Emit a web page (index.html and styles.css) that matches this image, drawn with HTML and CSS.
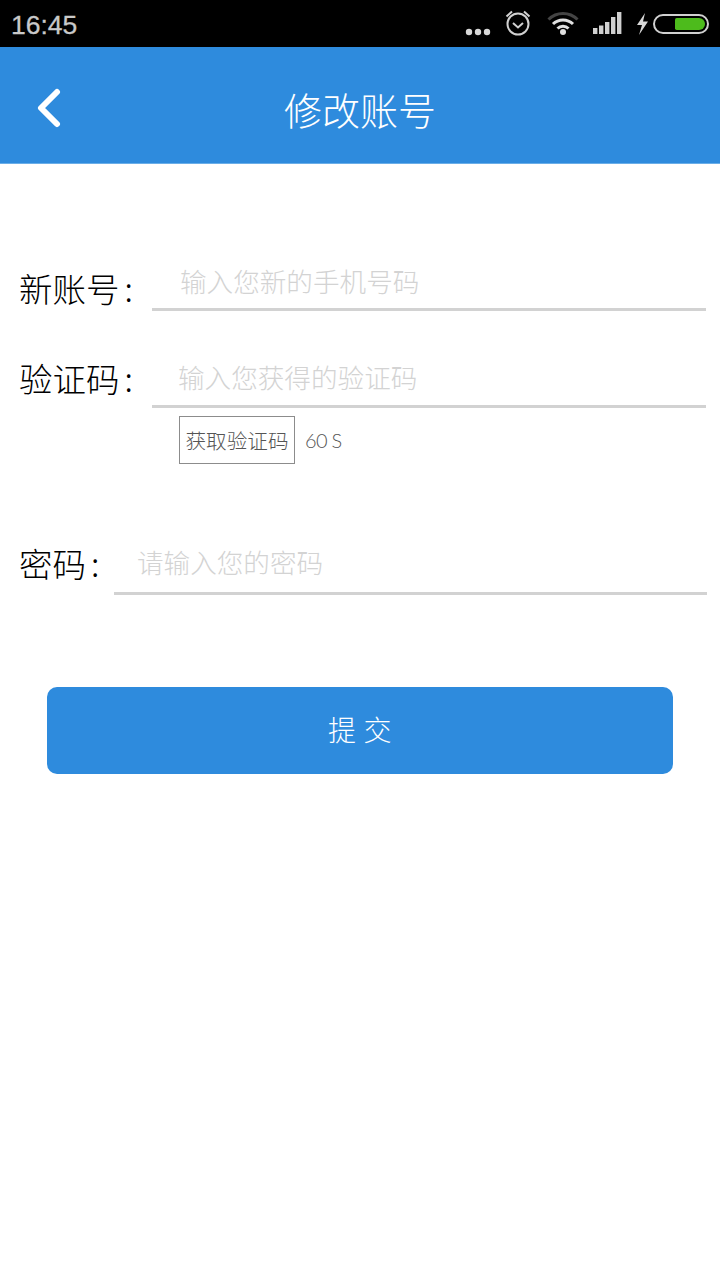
FILE: index.html
```html
<!DOCTYPE html>
<html lang="zh-CN">

<head>
    <meta charset="UTF-8">
    <meta name="viewport" content="width=device-width, initial-scale=1.0">
    <title>修改账号</title>
    <link rel="stylesheet" href="styles.css">
</head>

<body>
    <div class="status-bar">
        <span class="time">16:45</span>
        <div class="status-icons">
            <svg class="ic-dots" viewBox="0 0 26 8" width="26" height="8">
                <circle cx="4" cy="4" r="3.2" />
                <circle cx="13" cy="4" r="3.2" />
                <circle cx="22" cy="4" r="3.2" />
            </svg>
            <svg class="ic-alarm" viewBox="0 0 28 28" width="28" height="28">
                <circle cx="14" cy="15" r="10.5" />
                <polyline points="9,14 14,18.5 19,14" />
                <path d="M2.5 7.5 L8 2.5 M25.5 7.5 L20 2.5" />
            </svg>
            <svg class="ic-wifi" viewBox="0 0 32 26" width="32" height="26">
                <path class="dim" d="M1.5 9.5 C9.5 1.5 22.5 1.5 30.5 9.5" />
                <path d="M6 14 C11.5 8.5 20.5 8.5 26 14" />
                <path d="M10.5 18.5 C13.5 15.5 18.5 15.5 21.5 18.5" />
                <circle cx="16" cy="22" r="3" />
            </svg>
            <svg class="ic-signal" viewBox="0 0 29 24" width="29" height="24">
                <rect x="0" y="17" width="4.4" height="6" />
                <rect x="6" y="14.5" width="4.4" height="8.5" />
                <rect x="12" y="11" width="4.4" height="12" />
                <rect x="18" y="6" width="4.4" height="17" />
                <rect x="24" y="1" width="4.4" height="22" />
            </svg>
            <svg class="ic-bolt" viewBox="0 0 13 22" width="13" height="22">
                <polygon points="9,0 1,12 6,12 3,22 12,8.5 7,8.5" />
            </svg>
            <div class="battery"><div class="battery-level"></div></div>
        </div>
    </div>

    <header class="title-bar">
        <svg class="back" viewBox="0 0 28 40" width="28" height="40">
            <polyline points="24,4 8,20 24,36" />
        </svg>
        <h1>修改账号</h1>
    </header>

    <form class="form">
        <div class="row row-account">
            <label class="label">新账号<i>:</i></label>
            <div class="field field-account"><input type="text" placeholder="输入您新的手机号码"></div>
        </div>
        <div class="row row-code">
            <label class="label">验证码<i>:</i></label>
            <div class="field field-code"><input type="text" placeholder="输入您获得的验证码"></div>
        </div>
        <div class="code-line">
            <button type="button" class="code-btn">获取验证码</button>
            <span class="count">60 S</span>
        </div>
        <div class="row row-password">
            <label class="label">密码<i>:</i></label>
            <div class="field field-password"><input type="password" placeholder="请输入您的密码"></div>
        </div>
        <button type="button" class="submit">提 交</button>
    </form>
</body>

</html>
```

FILE: styles.css
```css
* {
    box-sizing: border-box;
}

body {
    margin: 0;
    height: 1280px;
    overflow: hidden;
    background: #fff;
    font-family: "Noto Sans CJK SC", "Noto Sans", sans-serif;
}

/* status bar */
.status-bar {
    display: flex;
    align-items: center;
    justify-content: space-between;
    height: 47px;
    padding: 0 11px 0 11px;
    background: #000;
}

.time {
    padding-top: 4px;
    font-family: "Liberation Sans", sans-serif;
    font-size: 26.5px;
    color: #c9c9c9;
    -webkit-text-stroke: 0.3px #c9c9c9;
}

.status-icons {
    display: flex;
    align-items: center;
}

.ic-dots {
    margin-top: 16px;
    fill: #d8d8d8;
}

.ic-alarm {
    margin-left: 13px;
    margin-top: -2px;
    fill: none;
    stroke: #d0d0d0;
    stroke-width: 2;
}

.ic-wifi {
    margin-left: 15px;
    margin-top: -2px;
    fill: none;
    stroke: #e0e0e0;
    stroke-width: 3;
}

.ic-wifi circle {
    fill: #e0e0e0;
    stroke: none;
}

.ic-wifi .dim {
    stroke: #444;
}

.ic-signal {
    margin-left: 14px;
    margin-top: -1px;
    fill: #d0d0d0;
}

.ic-bolt {
    margin-left: 14px;
    fill: #d8d8d8;
}

.battery {
    display: flex;
    justify-content: flex-end;
    width: 56px;
    height: 20px;
    margin-left: 4px;
    padding: 2px;
    border: 2px solid #d0d0d0;
    border-radius: 10px;
}

.battery-level {
    width: 30px;
    border-radius: 2px 7px 7px 2px;
    background: #4dbb1c;
}

/* title */
.title-bar {
    position: relative;
    display: flex;
    align-items: center;
    justify-content: center;
    height: 117px;
    padding-top: 6px;
    border-bottom: 1px solid #6aaee8;
    background: #2e8bdd;
}

.title-bar h1 {
    margin: 0;
    font-size: 38px;
    font-weight: 300;
    color: #fff;
}

.back {
    position: absolute;
    left: 33px;
    top: 41px;
    fill: none;
    stroke: #fff;
    stroke-width: 6;
    stroke-linecap: round;
    stroke-linejoin: round;
}

/* form */
.form {
    display: flex;
    flex-direction: column;
}

.row {
    display: flex;
    align-items: flex-end;
    padding-left: 19px;
}

.row-account {
    margin-top: 91px;
    padding-right: 14px;
}

.row-code {
    margin-top: 41px;
    padding-right: 14px;
}

.row-password {
    margin-top: 75px;
    padding-right: 13px;
}

.label {
    flex: none;
    font-size: 33.5px;
    font-weight: 300;
    line-height: 44px;
    color: #000;
}

.row-account .label {
    width: 133px;
    margin-bottom: 1px;
}

.row-code .label {
    width: 133px;
    margin-bottom: 8px;
}

.row-password .label {
    width: 95px;
    margin-bottom: 10px;
}

.label i {
    margin-left: 5px;
    font-style: normal;
}

.field {
    flex: 1;
    height: 56px;
    border-bottom: 3px solid #d2d2d2;
}

.field input {
    display: block;
    width: 100%;
    height: 100%;
    padding: 0 0 4px;
    border: 0;
    outline: 0;
    background: transparent;
    font-family: inherit;
    font-size: 26.6px;
    font-weight: 300;
}

.field input::placeholder {
    color: #d3d3d3;
    opacity: 1;
}

.field-account input {
    padding-left: 28px;
    padding-bottom: 2px;
}

.field-code input {
    padding-left: 26px;
}

.field-password input {
    padding-left: 23px;
    padding-bottom: 8px;
}

.code-line {
    display: flex;
    align-items: center;
    margin-top: 8px;
    padding-left: 179px;
}

.code-btn {
    width: 116px;
    height: 48px;
    padding: 0;
    border: 1px solid #8c8c8c;
    border-radius: 0;
    background: #fff;
    font-family: inherit;
    font-size: 20.6px;
    font-weight: 300;
    color: #555;
}

.count {
    margin-left: 10px;
    font-family: Lato, sans-serif;
    font-size: 20px;
    font-weight: 300;
    letter-spacing: -0.7px;
    color: #555;
}

.submit {
    align-self: center;
    width: 626px;
    height: 87px;
    margin-top: 92px;
    padding-bottom: 4px;
    border: 0;
    border-radius: 10px;
    background: #2e8bdd;
    font-family: inherit;
    font-size: 28px;
    font-weight: 300;
    letter-spacing: 0.6px;
    color: #fff;
}
```
